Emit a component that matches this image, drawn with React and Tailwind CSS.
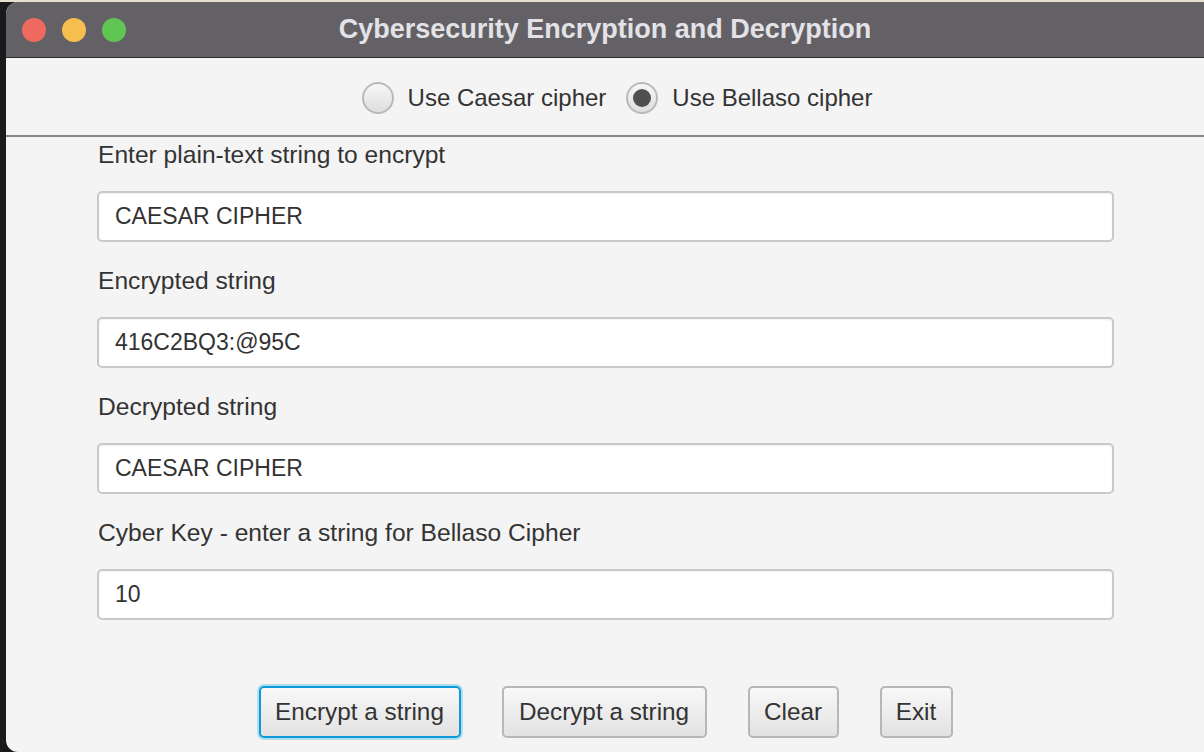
import React, { useState } from "react";

const fields = [
  { label: "Enter plain-text string to encrypt", name: "plain", value: "CAESAR CIPHER" },
  { label: "Encrypted string", name: "encrypted", value: "416C2BQ3:@95C" },
  { label: "Decrypted string", name: "decrypted", value: "CAESAR CIPHER" },
  { label: "Cyber Key - enter a string for Bellaso Cipher", name: "key", value: "10" },
];

const Radio = ({ checked, label, onClick }) => (
  <button type="button" onClick={onClick} className="flex items-center gap-[14px]">
    <span className="w-[32px] h-[32px] rounded-full border-2 border-[#b9b9b9] bg-gradient-to-b from-[#f7f7f7] to-[#dedede] flex items-center justify-center">
      {checked && <span className="w-[18px] h-[18px] rounded-full bg-[#505050]" />}
    </span>
    <span className="text-[24px] leading-[28px] text-[#333]">{label}</span>
  </button>
);

const App = () => {
  const [cipher, setCipher] = useState("bellaso");
  const [form, setForm] = useState(
    Object.fromEntries(fields.map((f) => [f.name, f.value]))
  );

  const handleChange = (e) => {
    setForm({ ...form, [e.target.name]: e.target.value });
  };

  return (
    <div
      className="w-[1204px] h-[752px] bg-[#1a1a1a] flex flex-col overflow-hidden"
      style={{ fontFamily: '"Liberation Sans", Arial, sans-serif' }}
    >
      <div className="h-[2px] bg-[#e6e1cf] shrink-0" />
      <div className="flex flex-1">
        <div className="w-[6px] shrink-0" />
        <div className="flex-1 flex flex-col bg-[#f4f4f4] rounded-tl-[12px] rounded-bl-[12px] overflow-hidden">
          {/* title bar */}
          <div className="relative h-[56px] bg-[#636166] border-b border-[#2b2a2d] flex items-center justify-center shrink-0">
            <div className="absolute left-[16px] top-[16px] flex gap-[16px]">
              <span className="w-[24px] h-[24px] rounded-full bg-[#ee6a5f]" />
              <span className="w-[24px] h-[24px] rounded-full bg-[#f5be4f]" />
              <span className="w-[24px] h-[24px] rounded-full bg-[#61c554]" />
            </div>
            <h1 className="text-[27px] font-bold text-[#e3e2e6]">
              Cybersecurity Encryption and Decryption
            </h1>
          </div>

          {/* cipher choice */}
          <div className="h-[79px] pt-[2px] border-b-2 border-[#858585] flex items-center justify-center gap-[20px] pl-[24px] shrink-0">
            <Radio
              checked={cipher === "caesar"}
              label="Use Caesar cipher"
              onClick={() => setCipher("caesar")}
            />
            <Radio
              checked={cipher === "bellaso"}
              label="Use Bellaso cipher"
              onClick={() => setCipher("bellaso")}
            />
          </div>

          {/* fields */}
          <div className="pl-[91px] pt-[4px] w-[1108px]">
            {fields.map((f) => (
              <div key={f.name} className="mb-[25px]">
                <div className="h-[28px] leading-[28px] text-[24.6px] text-[#333] pl-[1px] mb-[22px]">
                  {f.label}
                </div>
                <input
                  type="text"
                  name={f.name}
                  value={form[f.name]}
                  onChange={handleChange}
                  className="w-[1017px] h-[51px] bg-white border-2 border-[#c9c9c9] rounded-[5px] px-[16px] text-[23px] text-[#333] outline-none shadow-[inset_0_1px_2px_rgba(0,0,0,0.06)]"
                />
              </div>
            ))}

            <div className="w-[1017px] flex justify-center gap-[41px] mt-[66px]">
              <button className="w-[202px] h-[52px] rounded-[5px] border-2 border-[#0a9bd8] ring-2 ring-[#b3def2] bg-gradient-to-b from-[#f8f8f8] to-[#e2e2e2] text-[24.3px] text-[#333]">
                Encrypt a string
              </button>
              <button className="w-[205px] h-[52px] rounded-[5px] border-2 border-[#b7b7b7] bg-gradient-to-b from-[#f8f8f8] to-[#e2e2e2] text-[24.3px] text-[#333]">
                Decrypt a string
              </button>
              <button
                onClick={() => setForm({ plain: "", encrypted: "", decrypted: "", key: "" })}
                className="w-[91px] h-[52px] rounded-[5px] border-2 border-[#b7b7b7] bg-gradient-to-b from-[#f8f8f8] to-[#e2e2e2] text-[24.3px] text-[#333]"
              >
                Clear
              </button>
              <button className="w-[73px] h-[52px] rounded-[5px] border-2 border-[#b7b7b7] bg-gradient-to-b from-[#f8f8f8] to-[#e2e2e2] text-[24.3px] text-[#333]">
                Exit
              </button>
            </div>
          </div>
        </div>
      </div>
    </div>
  );
};

export default App;
